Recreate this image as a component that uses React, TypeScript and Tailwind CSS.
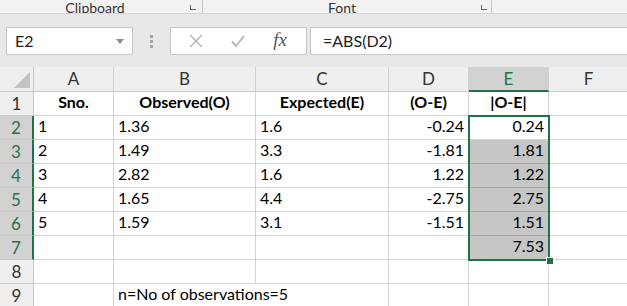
import React from "react";

const cols = [
  { w: "w-[80px]", label: "A" },
  { w: "w-[142px]", label: "B" },
  { w: "w-[133px]", label: "C" },
  { w: "w-[80px]", label: "D" },
  { w: "w-[80px]", label: "E" },
  { w: "w-[80px]", label: "F" },
];

type Row = { n: number; cells: (string | null)[]; bold?: boolean };

const rows: Row[] = [
  { n: 1, cells: ["Sno.", "Observed(O)", "Expected(E)", "(O-E)", "|O-E|", ""], bold: true },
  { n: 2, cells: ["1", "1.36", "1.6", "-0.24", "0.24", ""] },
  { n: 3, cells: ["2", "1.49", "3.3", "-1.81", "1.81", ""] },
  { n: 4, cells: ["3", "2.82", "1.6", "1.22", "1.22", ""] },
  { n: 5, cells: ["4", "1.65", "4.4", "-2.75", "2.75", ""] },
  { n: 6, cells: ["5", "1.59", "3.1", "-1.51", "1.51", ""] },
  { n: 7, cells: ["", "", "", "", "7.53", ""] },
  { n: 8, cells: ["", "", "", "", "", ""] },
  { n: 9, cells: ["", "n=No of observations=5", "", "", "", ""] },
];

export default function App() {
  return (
    <div
      className="w-[627px] h-[306px] overflow-hidden bg-white relative"
      style={{ fontFamily: "Lato, 'Noto Sans', sans-serif" }}
    >
      {/* ribbon bottom strip */}
      <div className="h-[14px] bg-[#f3f3f3] border-b border-[#d5d5d5] relative overflow-hidden text-[14px] text-[#333] leading-none">
        <div className="flex h-full items-end">
          <div className="w-[190px] flex justify-center -mb-[2px]">Clipboard</div>
          <div className="w-[12px] flex items-end">
            <span className="border-l border-b border-[#666] w-[6px] h-[5px] mb-[3px]" />
          </div>
          <div className="w-px h-full bg-[#c8c8c8]" />
          <div className="w-[278px] flex justify-center -mb-[2px]">Font</div>
          <div className="w-[10px] flex items-end">
            <span className="border-l border-b border-[#666] w-[6px] h-[5px] mb-[3px]" />
          </div>
          <div className="w-px h-full bg-[#c8c8c8]" />
        </div>
      </div>

      {/* formula bar area */}
      <div className="h-[53px] bg-[#e8e8e8] flex items-start pt-[13px]">
        <div className="ml-[6px] w-[127px] h-[28px] bg-white border border-[#c6c6c6] flex items-center pl-[8px] pr-[8px] text-[16px] text-[#222]">
          <span className="flex-1">E2</span>
          <svg width="8" height="5" viewBox="0 0 8 5">
            <path d="M0 0 L8 0 L4 5 Z" fill="#8a8a8a" />
          </svg>
        </div>
        <div className="w-[37px] h-[28px] flex flex-col items-center justify-center gap-[2px]">
          <span className="w-[3px] h-[3px] bg-[#a6a6a6]" />
          <span className="w-[3px] h-[3px] bg-[#a6a6a6]" />
          <span className="w-[3px] h-[3px] bg-[#a6a6a6]" />
        </div>
        <div className="w-[137px] h-[28px] bg-white border border-[#c6c6c6] flex items-center">
          <div className="w-[45px] flex justify-center pl-[4px]">
            <svg width="16" height="16" viewBox="0 0 16 16">
              <path d="M2 2 L14 14 M14 2 L2 14" stroke="#b0b0b0" strokeWidth="1.4" fill="none" />
            </svg>
          </div>
          <div className="w-[44px] flex justify-center">
            <svg width="16" height="16" viewBox="0 0 16 16">
              <path d="M2 8.5 L6 13 L14 3" stroke="#b8b8b8" strokeWidth="2" fill="none" />
            </svg>
          </div>
          <div
            className="flex-1 flex justify-center text-[19px] italic text-[#555] -mt-[2px] pr-[6px]"
            style={{ fontFamily: "'Liberation Serif', serif" }}
          >
            fx
          </div>
        </div>
        <div className="ml-[3px] flex-1 h-[28px] bg-white border border-[#c6c6c6] border-r-0 flex items-center pl-[12px] text-[16px] text-[#222]">
          =ABS(D2)
        </div>
      </div>

      {/* grid */}
      <div className="relative">
        {/* column header row */}
        <div className="flex h-[25px] bg-[#efefef] border-b border-[#c8c8c8]">
          <div className="w-[34px] shrink-0 border-r border-[#c8c8c8] relative flex items-end justify-end pr-[3px] pb-[3px]">
            <svg width="16" height="16" viewBox="0 0 16 16">
              <path d="M16 0 L16 16 L0 16 Z" fill="#c2c2c2" />
            </svg>
          </div>
          {cols.map((c) => {
            const sel = c.label === "E";
            return (
              <div
                key={c.label}
                className={
                  c.w +
                  " shrink-0 border-r border-[#d0d0d0] flex items-center justify-center text-[17px] " +
                  (sel
                    ? "bg-[#d2d2d2] text-[#217346] border-b-2 border-b-[#217346] -mb-px"
                    : "text-[#333]")
                }
              >
                {c.label}
              </div>
            );
          })}
          <div className="flex-1" />
        </div>

        {rows.map((r) => {
          const selRow = r.n >= 2 && r.n <= 7;
          return (
            <div key={r.n} className="flex h-[24px]">
              <div
                className={
                  "w-[34px] shrink-0 border-b border-[#c8c8c8] flex items-center justify-center text-[17px] " +
                  (selRow
                    ? "bg-[#d2d2d2] text-[#217346] border-r-2 border-r-[#217346]"
                    : "bg-[#efefef] text-[#333] border-r border-r-[#c8c8c8]")
                }
              >
                {r.n}
              </div>
              {cols.map((c, i) => {
                const v = r.cells[i] ?? "";
                const right = i === 3 || i === 4;
                const highlight = i === 4 && r.n >= 3 && r.n <= 7;
                const hideRight = r.n === 9 && i === 1;
                let cls =
                  c.w +
                  " shrink-0 border-b flex items-end pb-[1px] px-[4px] text-[16px] text-black whitespace-nowrap overflow-visible ";
                cls += hideRight ? "border-r border-r-transparent " : "border-r border-r-[#d4d4d4] ";
                cls += highlight ? "bg-[#c6c6c6] border-b-[#a8a8a8] " : "border-b-[#d4d4d4] ";
                if (r.bold) cls += "font-bold justify-center ";
                else if (right) cls += "justify-end ";
                return (
                  <div key={c.label} className={cls}>
                    <span className="relative z-10">{v}</span>
                  </div>
                );
              })}
              <div className="flex-1 border-b border-[#d4d4d4]" />
            </div>
          );
        })}

        {/* selection box */}
        <div className="absolute left-[468px] top-[48px] w-[82px] h-[146px] border-2 border-[#217346] pointer-events-none" />
        <div className="absolute left-[546px] top-[190px] w-[6px] h-[6px] bg-[#217346] border border-white box-content pointer-events-none" />
      </div>
    </div>
  );
}
